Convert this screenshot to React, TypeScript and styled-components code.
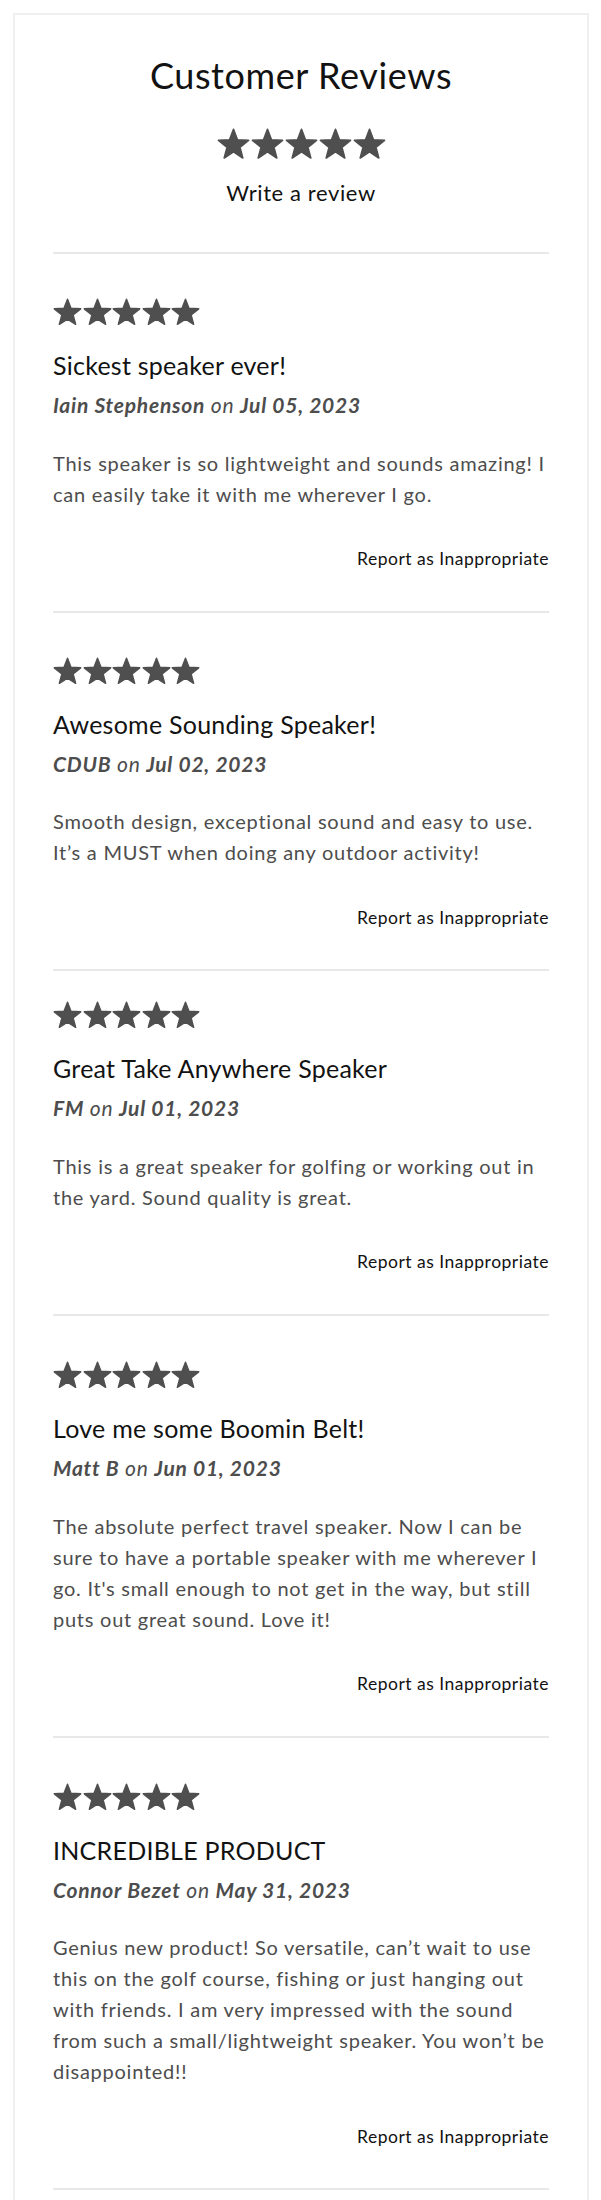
import * as React from 'react';
import styled, { createGlobalStyle } from 'styled-components';

interface Review {
	title: string
	author: string
	date: string
	body: string
	top?: number
}

const reviews: Review[] = [
	{
		title: 'Sickest speaker ever!',
		author: 'Iain Stephenson',
		date: 'Jul 05, 2023',
		body: 'This speaker is so lightweight and sounds amazing! I can easily take it with me wherever I go.'
	},
	{
		title: 'Awesome Sounding Speaker!',
		author: 'CDUB',
		date: 'Jul 02, 2023',
		body: 'Smooth design, exceptional sound and easy to use. It\u2019s a MUST when doing any outdoor activity!'
	},
	{
		title: 'Great Take Anywhere Speaker',
		author: 'FM',
		date: 'Jul 01, 2023',
		body: 'This is a great speaker for golfing or working out in the yard. Sound quality is great.',
		top: 30
	},
	{
		title: 'Love me some Boomin Belt!',
		author: 'Matt B',
		date: 'Jun 01, 2023',
		body: 'The absolute perfect travel speaker. Now I can be sure to have a portable speaker with me wherever I go. It\'s small enough to not get in the way, but still puts out great sound. Love it!',
		top: 45.5
	},
	{
		title: 'INCREDIBLE PRODUCT',
		author: 'Connor Bezet',
		date: 'May 31, 2023',
		body: 'Genius new product! So versatile, can\u2019t wait to use this on the golf course, fishing or just hanging out with friends. I am very impressed with the sound from such a small/lightweight speaker. You won\u2019t be disappointed!!',
		top: 45
	}
];

const ink = '#121212';
const grey = '#4d4d4d';
const starGrey = '#4f4f4f';
const rule = '#e8e8e8';

const Star = ({ size }: { size: number }) => (
	<svg width={size} height={size} viewBox="0 0 24 24" aria-hidden="true">
		<path
			d="M12 1 L14.88 8.54 L22.94 8.95 L16.66 14.01 L18.76 21.8 L12 17.4 L5.24 21.8 L7.34 14.01 L1.06 8.95 L9.12 8.54 Z"
			fill={starGrey}
			stroke={starGrey}
			strokeWidth={1.2}
			strokeLinejoin="round"
		/>
	</svg>
);

const Stars = ({ size, gap, center }: { size: number, gap: number, center?: boolean }) => (
	<StarRow $gap={gap} $center={center}>
		{[0, 1, 2, 3, 4].map(i => <Star key={i} size={size} />)}
	</StarRow>
);

export default function App() {
	return (
		<>
			<GlobalStyle />
			<Card>
				<Header>
					<Heading>Customer Reviews</Heading>
					<Stars size={33} gap={1} center />
					<WriteLink>Write a review</WriteLink>
				</Header>
				<List>
					{reviews.map(r => (
						<Item key={r.title} $top={r.top ?? 44}>
							<Stars size={29} gap={0.6} />
							<Title>{r.title}</Title>
							<Byline>
								<strong>{r.author}</strong> on <strong>{r.date}</strong>
							</Byline>
							<Body>{r.body}</Body>
							<Footer>
								<Report>Report as Inappropriate</Report>
							</Footer>
						</Item>
					))}
				</List>
			</Card>
		</>
	);
}

const GlobalStyle = createGlobalStyle`
	body {
		margin: 0;
		background: #fff;
		font-family: Lato, "Liberation Sans", sans-serif;
		color: ${ink};
	}
`;

const Card = styled.div`
	margin: 13px 12px 0 13px;
	border: 2px solid #efefef;
	border-bottom: none;
	padding: 42px 38px 40px;
`;

const Header = styled.div`
	display: flex;
	flex-direction: column;
	align-items: center;
	padding-bottom: 48px;
	border-bottom: 2px solid ${rule};
`;

const Heading = styled.h2`
	margin: 0 0 35px;
	font-size: 36px;
	font-weight: 400;
	line-height: 1;
	letter-spacing: 0.6px;
	color: ${ink};
`;

const StarRow = styled.div<{ $gap: number, $center?: boolean }>`
	display: flex;
	gap: ${p => p.$gap}px;
	justify-content: ${p => p.$center ? 'center' : 'flex-start'};

	svg {
		display: block;
	}
`;

const WriteLink = styled.a`
	margin-top: 21px;
	font-size: 22px;
	line-height: 1;
	letter-spacing: 0.6px;
	color: ${ink};
	cursor: pointer;
`;

const List = styled.div`
	display: flex;
	flex-direction: column;
`;

const Item = styled.div<{ $top: number }>`
	padding: ${p => p.$top}px 0 43px;
	border-bottom: 2px solid ${rule};
`;

const Title = styled.h3`
	margin: 26px 0 0;
	font-size: 25px;
	font-weight: 400;
	line-height: 1;
	letter-spacing: 0.25px;
	color: ${ink};
`;

const Byline = styled.div`
	margin-top: 16px;
	font-size: 21px;
	font-style: italic;
	line-height: 1;
	letter-spacing: 0.75px;
	color: ${grey};

	strong {
		font-weight: 700;
	}
`;

const Body = styled.p`
	margin: 32.5px 0 0;
	font-size: 20px;
	line-height: 31px;
	letter-spacing: 0.75px;
	color: ${grey};
`;

const Footer = styled.div`
	display: flex;
	justify-content: flex-end;
	margin-top: 40.5px;
`;

const Report = styled.a`
	font-size: 17.5px;
	line-height: 1;
	letter-spacing: 0.5px;
	color: ${ink};
	cursor: pointer;
`;
